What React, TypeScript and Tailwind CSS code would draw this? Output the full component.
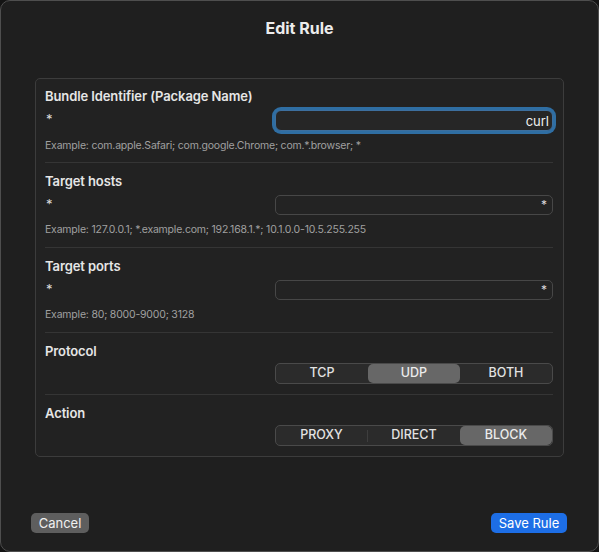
import React from 'react';

const FONT = { fontFamily: 'Inter, "Noto Sans", sans-serif' };

function FieldRow({
  label,
  value,
  example,
  focused,
  first,
}: {
  label: string;
  value: string;
  example: string;
  focused?: boolean;
  first?: boolean;
}) {
  return (
    <div className={first ? 'pt-[9px] pb-[9px]' : 'border-t border-[#353535] pt-[10px] pb-[10px]'}>
      <div className="text-[13px] leading-[16px] font-semibold tracking-[-0.1px] text-[#e6e6e6]">{label}</div>
      <div className="mt-[6px] flex items-center justify-between">
        <span className="-mt-[3px] pl-[1px] text-[13px] leading-[20px] text-[#dcdcdc]">*</span>
        <div
          className={
            focused
              ? 'flex h-[21px] w-[278px] items-center justify-end rounded-[6px] border border-[#3d6f9e] bg-[#262626] px-[3px] ring-[3px] ring-[#2f6ea3]'
              : 'flex h-[20px] w-[278px] items-center justify-end rounded-[5px] border border-[#474747] bg-[#232323] px-[5px]'
          }
        >
          <span className={focused ? 'text-[13px] leading-[16px] text-[#f0f0f0]' : 'text-[12px] leading-[16px] text-[#dcdcdc]'}>
            {value}
          </span>
        </div>
      </div>
      <div className="mt-[8px] text-[10.5px] leading-[14px] tracking-[-0.2px] text-[#a0a0a0]">{example}</div>
    </div>
  );
}

function Segmented({ options, selected, divider }: { options: string[]; selected: number; divider?: number }) {
  return (
    <div className="flex h-[21px] w-[278px] rounded-[5px] border border-[#4a4a4a] bg-[#2b2b2b]">
      {options.map((o, i) => (
        <div
          key={o}
          className={
            i === selected
              ? 'flex flex-1 items-center justify-center rounded-[5px] bg-[#676767] text-[12.5px] font-medium text-[#ececec]'
              : 'flex flex-1 items-center justify-center text-[12.5px] font-medium text-[#e2e2e2]'
          }
        >
          {divider === i ? (
            <div className="flex w-full items-center">
              <span className="flex-1 text-center">{o}</span>
              <span className="h-[12px] w-px bg-[#3e3e3e]" />
            </div>
          ) : (
            o
          )}
        </div>
      ))}
    </div>
  );
}

function SegRow({ label, options, selected, divider }: { label: string; options: string[]; selected: number; divider?: number }) {
  return (
    <div className="border-t border-[#353535] pt-[10px] pb-[10px]">
      <div className="text-[13px] leading-[16px] font-semibold tracking-[-0.1px] text-[#e6e6e6]">{label}</div>
      <div className="mt-[4px] flex justify-end">
        <Segmented options={options} selected={selected} divider={divider} />
      </div>
    </div>
  );
}

export default function App() {
  return (
    <div className="h-[552px] w-[599px] bg-[#141414]" style={FONT}>
      <div className="flex h-[552px] w-[599px] flex-col rounded-[10px] border border-[#4e4e4e] bg-[#1f1f1f]">
        <div className="pt-[17px] text-center text-[16px] leading-[20px] font-bold text-[#ececec]">Edit Rule</div>

        <div className="mx-[34px] mt-[40px] rounded-[5px] border border-[#3c3c3c] bg-[#222222] pl-[9px] pr-[10px]">
          <FieldRow
            first
            focused
            label="Bundle Identifier (Package Name)"
            value="curl"
            example="Example: com.apple.Safari; com.google.Chrome; com.*.browser; *"
          />
          <FieldRow
            label="Target hosts"
            value="*"
            example="Example: 127.0.0.1; *.example.com; 192.168.1.*; 10.1.0.0-10.5.255.255"
          />
          <FieldRow label="Target ports" value="*" example="Example: 80; 8000-9000; 3128" />
          <SegRow label="Protocol" options={['TCP', 'UDP', 'BOTH']} selected={1} />
          <SegRow label="Action" options={['PROXY', 'DIRECT', 'BLOCK']} selected={2} divider={0} />
        </div>

        <div className="mt-[56px] flex items-center justify-between pl-[30px] pr-[31px]">
          <button className="h-[20px] w-[58px] rounded-[5px] bg-[#5e5e5e] text-[13px] leading-[20px] text-[#f0f0f0]">
            Cancel
          </button>
          <button className="h-[20px] w-[76px] rounded-[5px] bg-[#1d6ee6] text-[13px] leading-[20px] text-white">
            Save Rule
          </button>
        </div>
      </div>
    </div>
  );
}
